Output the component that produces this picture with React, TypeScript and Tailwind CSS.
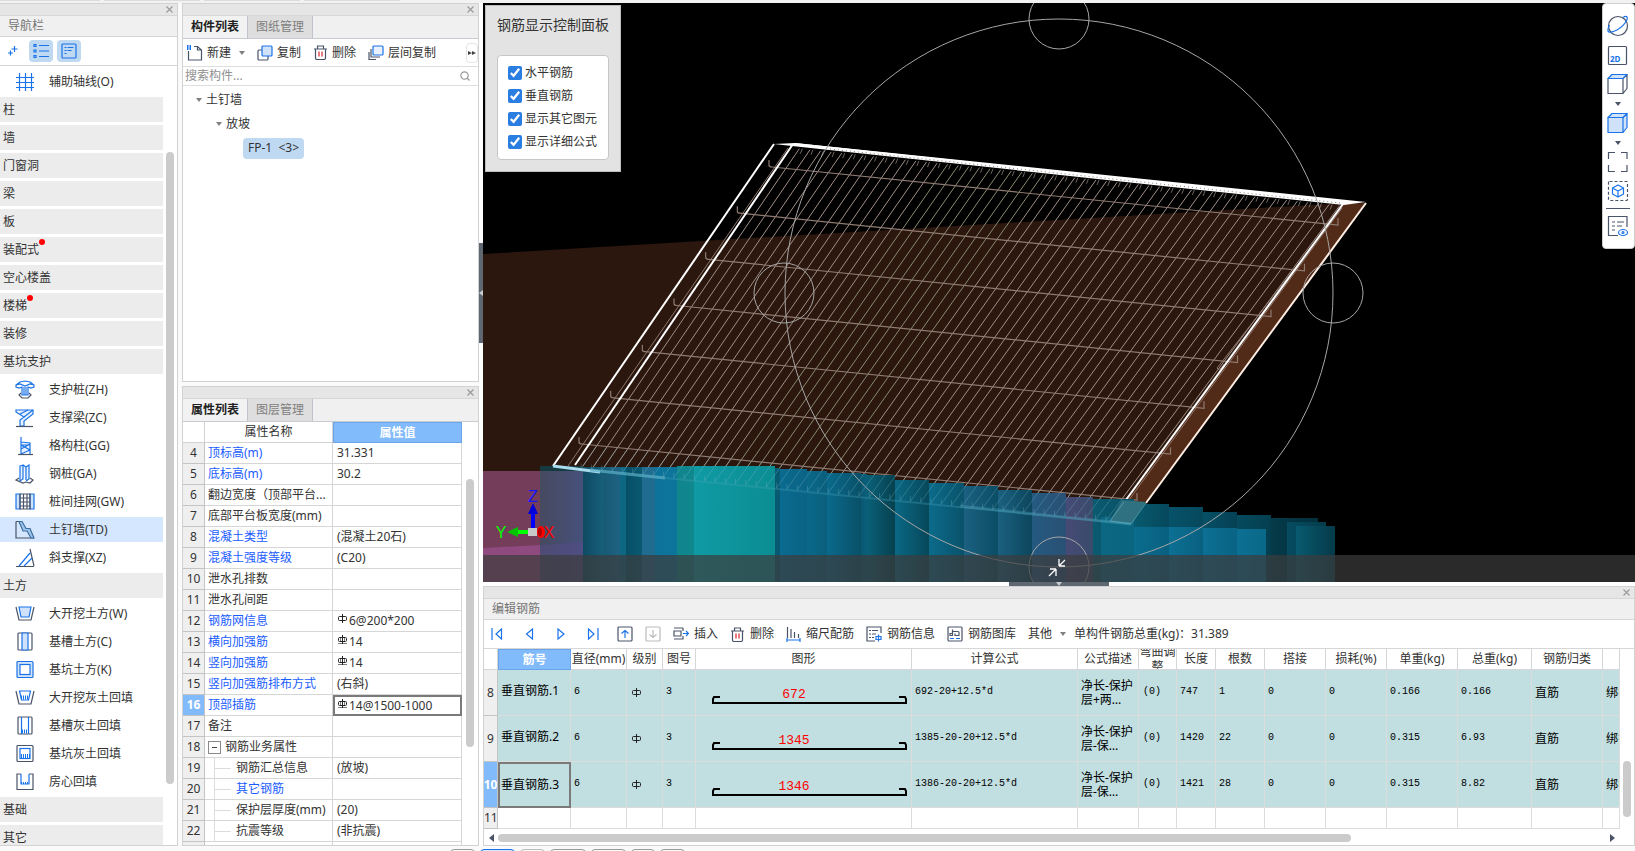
import * as React from 'react'

const BLUE = '#1a73e8'
const INK = '#4a5468'
const FILL = '#d0e2fa'

interface IconProps {
  size?: number
  children: React.ReactNode
}

const Icon: React.FC<IconProps> = ({ size = 20, children }) => (
  <svg
    width={size}
    height={size}
    viewBox={`0 0 ${size} ${size}`}
    fill="none"
    strokeWidth={1.2}
    className="shrink-0"
    aria-hidden="true"
  >
    {children}
  </svg>
)

const CloseButton = () => (
  <button type="button" aria-label="关闭" className="flex h-full w-4 items-center justify-center">
    <svg width="7" height="7" viewBox="0 0 7 7" stroke="#9a9a9a" strokeWidth="1.2">
      <path d="M0.5 0.5l6 6M6.5 0.5l-6 6" />
    </svg>
  </button>
)

const Caret: React.FC<{ color?: string }> = ({ color = '#808080' }) => (
  <svg width="6" height="4" viewBox="0 0 6 4" className="shrink-0" aria-hidden="true">
    <path d="M0 0h6L3 4z" fill={color} />
  </svg>
)

const TitleStrip = () => (
  <div className="flex h-3 shrink-0 justify-end border-b border-[#d6d6d6] bg-[#e6e6e6]">
    <CloseButton />
  </div>
)

/* ---------- navigation ---------- */

const navIcons: Record<string, React.ReactNode> = {
  axis: <path stroke={BLUE} d="M1 5.5h18M1 10.5h18M1 15.5h18M4.5 1v18M10.5 1v18M16.5 1v18" />,
  pile: (
    <>
      <path stroke={BLUE} d="M1 5l4-3 5-1 5 1 4 3v2l-3 1-3-1v8H7V7L4 8 1 7zM1 5l4-1 5 2 5-2 4 1M9 7v8M11 7v8" />
      <path stroke={INK} d="M6 13l-2 2 3 3h6l3-3-2-2" />
    </>
  ),
  strut: (
    <>
      <path stroke={BLUE} fill="#e8f1fd" d="M1 2h17v4l-9 7v5H5v-6l4-3-8-5z" />
      <path stroke={BLUE} d="M5 6l8-4M9 9l9-7" />
      <path stroke={INK} d="M1 18.5h17" />
    </>
  ),
  lattice: (
    <>
      <path stroke={BLUE} fill="#e8f1fd" d="M6 1v17M6 6l9 1v11M6 9h9M6 9l9 5-9 4M6 13l9-5" />
      <path stroke={INK} d="M3 18.5h15" />
    </>
  ),
  steel: (
    <>
      <path stroke={BLUE} fill="#e8f1fd" d="M5 2l3-1v14l-3 2zM8 1l3 2v13M11 3l3-2v14l-3 2" />
      <path stroke={INK} d="M4 14l-3 2 7 3 3-1 4 1 3-3-3-2" />
    </>
  ),
  mesh: (
    <>
      <path stroke={BLUE} fill={FILL} d="M1 2h4v15H1zM15 2h4v15h-4z" />
      <path stroke={INK} d="M5 2h10v15H5zM8.5 2v15M12 2v15M5 6h10M5 10h10M5 14h10" />
    </>
  ),
  nail: (
    <>
      <path stroke={INK} d="M1 1.5v16.5h18M1 1.5l5 0" />
      <path stroke="#3c6f9f" fill="#9fc4ea" d="M4 1.5h3l4 7h4l4 9.5h-3l-4-7H8z" />
    </>
  ),
  brace: (
    <>
      <path stroke={INK} d="M1 18.5h18M15 1l4 17" />
      <path stroke={BLUE} d="M4 18L15 5M9 18l8-8" />
    </>
  ),
  dig: (
    <>
      <path stroke={INK} d="M1 3l3 13h12l3-13" />
      <path stroke={BLUE} fill={FILL} d="M4 3h12l-2 10H6z" />
    </>
  ),
  trench: (
    <>
      <rect stroke={INK} x="3" y="1" width="14" height="17" rx="1" />
      <path stroke={BLUE} fill={FILL} d="M7 1h6v17H7z" />
    </>
  ),
  pit: (
    <>
      <rect stroke={BLUE} fill={FILL} x="2" y="1.5" width="16" height="16" rx="1" />
      <rect stroke={BLUE} fill="#fff" x="5" y="4.5" width="10" height="10" />
    </>
  ),
  digFill: (
    <>
      <path stroke={INK} d="M1 3l3 13h12l3-13" />
      <path stroke={BLUE} d="M4.5 3h11l-2 9h-7z" />
      <path stroke={BLUE} strokeWidth={4} strokeDasharray="1 1" d="M6 9.5h8" />
    </>
  ),
  trenchFill: (
    <>
      <rect stroke={INK} x="3" y="1" width="14" height="17" rx="1" />
      <path stroke={BLUE} d="M6.5 1v17M13.5 1v17" />
      <path stroke={BLUE} strokeWidth={4} strokeDasharray="1 1" d="M7 15.5h6" />
    </>
  ),
  pitFill: (
    <>
      <rect stroke={INK} x="2" y="1.5" width="16" height="16" rx="1" />
      <rect stroke={BLUE} x="5" y="4.5" width="10" height="10" />
      <path stroke={BLUE} strokeWidth={4} strokeDasharray="1 1" d="M6 12h9" />
    </>
  ),
  room: (
    <>
      <path stroke={INK} d="M6 2H2v15.500h16V2h-4" />
      <path stroke={BLUE} d="M6 2v10h8V2" />
      <path stroke={BLUE} strokeWidth={2} strokeDasharray="1 1" d="M6 11h8" />
    </>
  ),
}

interface NavRow {
  label: string
  icon?: string
  dot?: boolean
  active?: boolean
}

const navRows: NavRow[] = [
  { label: '辅助轴线(O)', icon: 'axis' },
  { label: '柱' },
  { label: '墙' },
  { label: '门窗洞' },
  { label: '梁' },
  { label: '板' },
  { label: '装配式', dot: true },
  { label: '空心楼盖' },
  { label: '楼梯', dot: true },
  { label: '装修' },
  { label: '基坑支护' },
  { label: '支护桩(ZH)', icon: 'pile' },
  { label: '支撑梁(ZC)', icon: 'strut' },
  { label: '格构柱(GG)', icon: 'lattice' },
  { label: '钢桩(GA)', icon: 'steel' },
  { label: '桩间挂网(GW)', icon: 'mesh' },
  { label: '土钉墙(TD)', icon: 'nail', active: true },
  { label: '斜支撑(XZ)', icon: 'brace' },
  { label: '土方' },
  { label: '大开挖土方(W)', icon: 'dig' },
  { label: '基槽土方(C)', icon: 'trench' },
  { label: '基坑土方(K)', icon: 'pit' },
  { label: '大开挖灰土回填', icon: 'digFill' },
  { label: '基槽灰土回填', icon: 'trenchFill' },
  { label: '基坑灰土回填', icon: 'pitFill' },
  { label: '房心回填', icon: 'room' },
  { label: '基础' },
  { label: '其它' },
]

const Navigation = () => (
  <nav className="flex w-[178px] shrink-0 flex-col border border-l-0 border-[#d2d2d2] bg-white">
    <TitleStrip />
    <h2 className="flex h-[21px] shrink-0 items-center border-b border-[#d6d6d6] bg-[#f0f0f0] pl-2 text-[#757575]">
      导航栏
    </h2>
    <div className="flex h-[29px] shrink-0 items-center gap-1 border-b border-[#d6d6d6] pl-1">
      <button type="button" aria-label="展开" className="flex w-[21px] items-center pl-1">
        <Icon size={10}>
          <path stroke={BLUE} d="M6.5 0v6M3.5 3h6M2.5 4.5v5M0 7h5" />
        </Icon>
      </button>
      <button type="button" aria-label="列表" className="flex h-[22px] w-6 items-center justify-center rounded-sm bg-[#bfd9f2]">
        <Icon size={16}>
          <path stroke={BLUE} d="M6 2.5h10M6 8h10M6 13.5h10" />
          <path stroke={BLUE} d="M1 1.5h2v2H1zM1 7h2v2H1zM1 12.5h2v2H1z" />
        </Icon>
      </button>
      <button type="button" aria-label="详情" className="flex h-[22px] w-6 items-center justify-center rounded-sm bg-[#bfd9f2]">
        <Icon size={16}>
          <rect stroke={BLUE} x="1" y="1" width="14" height="14" rx="1" />
          <path stroke={BLUE} d="M3.5 4.5h2M6.5 4.5h6M3.5 7.5h2M6.5 7.5h4M3.5 10.5h2" />
        </Icon>
      </button>
    </div>
    <div className="flex min-h-0 flex-1 overflow-hidden">
      <ul className="flex flex-1 flex-col gap-[3px] pt-[3px]">
        {navRows.map(row => (
          <li key={row.label} className="shrink-0">
            {row.icon ? (
              <button
                type="button"
                className={`flex h-[25px] w-full items-center gap-[14px] pl-[15px] ${row.active ? 'bg-[#d4e7ff]' : ''}`}
              >
                <Icon>{navIcons[row.icon]}</Icon>
                <span>{row.label}</span>
              </button>
            ) : (
              <button type="button" className="flex h-[25px] w-full items-center bg-[#ececec] pl-[3px]">
                {row.label}
                {row.dot && <span className="mb-4 size-[6px] rounded-full bg-[#ff0000]" />}
              </button>
            )}
          </li>
        ))}
      </ul>
      <div className="w-[14px] px-[3px] pt-[86px]">
        <div className="h-[632px] w-2 rounded bg-[#cbcbcb]" />
      </div>
    </div>
  </nav>
)

/* ---------- component tree ---------- */

const Tabs: React.FC<{ items: string[] }> = ({ items }) => (
  <div className="flex h-[23px] shrink-0 border-b border-[#c8ccd2] bg-[#f0f0f0]">
    {items.map((item, i) => (
      <button
        key={item}
        type="button"
        className={`w-[65px] border-r border-[#c0c4ca] ${i === 0 ? 'bg-[#f2f2f2] font-bold text-[#222]' : 'bg-[#dedede] text-[#808080]'}`}
      >
        {item}
      </button>
    ))}
  </div>
)

const TrashIcon = () => (
  <Icon size={15}>
    <path stroke={INK} d="M1 4h13M4.5 4V1h6v3M2.5 4v9a1.5 1.5 0 0 0 1.5 1.5h7a1.5 1.5 0 0 0 1.5-1.5V4" />
    <path stroke="#d9232e" d="M6 6.5v5M9 6.5v5" />
  </Icon>
)

const ComponentPanel = () => (
  <section className="flex h-[379px] shrink-0 flex-col border border-[#d2d2d2] bg-white">
    <TitleStrip />
    <Tabs items={['构件列表', '图纸管理']} />
    <div className="flex h-[28px] shrink-0 items-center border-b border-[#dedede] pl-1">
      <button type="button" className="flex items-center gap-1">
        <Icon size={16}>
          <path stroke={INK} d="M1.5 6v9h13V5l-4-3.5H7M10.5 1.5V5h4" />
          <path stroke={BLUE} strokeWidth={5} strokeDasharray="1.5 1" d="M0 2.5h5" />
        </Icon>
        新建
      </button>
      <span className="ml-2">
        <Caret />
      </span>
      <button type="button" className="ml-3 flex items-center gap-1">
        <Icon size={16}>
          <rect stroke={INK} x="1" y="5" width="10" height="10" rx="1" />
          <rect stroke={BLUE} fill={FILL} x="5" y="1" width="10" height="10" rx="1" />
        </Icon>
        复制
      </button>
      <button type="button" className="ml-3 flex items-center gap-1">
        <TrashIcon />
        删除
      </button>
      <button type="button" className="ml-3 flex items-center gap-1">
        <Icon size={16}>
          <rect stroke={BLUE} fill="#e8f1fd" x="5" y="1" width="10" height="9" rx="1" />
          <path stroke={INK} d="M3 4v8h9M1 7v7.5h7" />
        </Icon>
        层间复制
      </button>
      <button type="button" aria-label="更多" className="ml-auto flex h-5 w-3 items-center justify-center rounded-sm border border-[#e4e4e4]">
        <svg width="8" height="4" viewBox="0 0 8 4" className="shrink-0">
          <path d="M0 0l4 2-4 2zM4 0l4 2-4 2z" fill="#444" />
        </svg>
      </button>
    </div>
    <div className="flex h-[19px] shrink-0 items-center border-b border-[#dedede] pr-2 pl-[2px]">
      <input
        type="text"
        aria-label="搜索构件"
        placeholder="搜索构件..."
        className="min-w-0 flex-1 outline-none placeholder:text-[#8f8f8f]"
      />
      <Icon size={10}>
        <circle stroke="#999" cx="4.5" cy="4.5" r="3.7" />
        <path stroke="#999" d="M7 7l2.5 2.5" />
      </Icon>
    </div>
    <ul className="flex flex-col pt-[2px]">
      <li className="flex h-6 items-center gap-1 pl-[13px]">
        <Caret />
        土钉墙
      </li>
      <li className="flex h-6 items-center gap-1 pl-[33px]">
        <Caret />
        放坡
      </li>
      <li className="flex h-6 items-center pl-[60px]">
        <button type="button" className="h-[21px] w-[61px] rounded-sm bg-[#bfd9f2] whitespace-pre">
          FP-1  &lt;3&gt;
        </button>
      </li>
    </ul>
  </section>
)

/* ---------- properties ---------- */

// rebar grade mark, HPB has one bar and HRB has an underline
const RebarMark: React.FC<{ grade?: 'a' | 'c' }> = ({ grade = 'a' }) => (
  <svg width="9" height="10" viewBox="0 0 9 10" fill="none" stroke="#222" className="inline-block shrink-0" role="img" aria-label="Φ">
    <rect x="0.5" y="2.5" width="8" height="4" rx="1" />
    <path d="M4.5 0v9" />
    {grade === 'c' && <path d="M0 8.5h9M2.5 2.5v4M6.5 2.5v4" strokeWidth="0.6" />}
  </svg>
)

interface PropRow {
  no: number
  name: string
  value?: string
  mark?: 'a' | 'c'
  blue?: boolean
  kind?: 'group' | 'child'
}

const propRows: PropRow[] = [
  { no: 4, name: '顶标高(m)', value: '31.331', blue: true },
  { no: 5, name: '底标高(m)', value: '30.2', blue: true },
  { no: 6, name: '翻边宽度（顶部平台...' },
  { no: 7, name: '底部平台板宽度(mm)' },
  { no: 8, name: '混凝土类型', value: '(混凝土20石)', blue: true },
  { no: 9, name: '混凝土强度等级', value: '(C20)', blue: true },
  { no: 10, name: '泄水孔排数' },
  { no: 11, name: '泄水孔间距' },
  { no: 12, name: '钢筋网信息', value: '6@200*200', mark: 'a', blue: true },
  { no: 13, name: '横向加强筋', value: '14', mark: 'c', blue: true },
  { no: 14, name: '竖向加强筋', value: '14', mark: 'c', blue: true },
  { no: 15, name: '竖向加强筋排布方式', value: '(右斜)', blue: true },
  { no: 16, name: '顶部插筋', value: '14@1500-1000', mark: 'c', blue: true },
  { no: 17, name: '备注' },
  { no: 18, name: '钢筋业务属性', kind: 'group' },
  { no: 19, name: '钢筋汇总信息', value: '(放坡)', kind: 'child' },
  { no: 20, name: '其它钢筋', blue: true, kind: 'child' },
  { no: 21, name: '保护层厚度(mm)', value: '(20)', kind: 'child' },
  { no: 22, name: '抗震等级', value: '(非抗震)', kind: 'child' },
]

const PropertyPanel = () => (
  <section className="flex min-h-0 flex-1 flex-col border border-[#d2d2d2] bg-white">
    <TitleStrip />
    <Tabs items={['属性列表', '图层管理']} />
    <div className="flex min-h-0 flex-1 overflow-hidden">
      <div className="flex-1">
        <table className="w-full table-fixed border-separate border-spacing-0">
          <colgroup>
            <col className="w-[22px]" />
            <col className="w-[128px]" />
            <col />
          </colgroup>
          <thead>
            <tr className="h-[21px]">
              <th className="border-r border-b border-[#d2d2d2]" />
              <th className="border-r border-b border-[#d2d2d2] p-0 font-normal">属性名称</th>
              <th className="border border-[#69a5e8] bg-[#82bbfb] p-0 font-bold text-white">属性值</th>
            </tr>
          </thead>
          <tbody>
            {propRows.map(row => {
              const current = row.no === 16
              return (
                <tr key={row.no} className="h-[21px]">
                  <td
                    className={`border-r border-b border-[#c4c4c4] p-0 text-center ${current ? 'bg-[#82bbfb] font-bold text-white' : 'bg-[#efefef]'}`}
                  >
                    {row.no}
                  </td>
                  <td className={`border-r border-b border-[#d6d6d6] p-0 whitespace-nowrap ${row.blue ? 'text-[#1a5cff]' : ''}`}>
                    <div className="flex h-5 items-center overflow-hidden pl-[3px]">
                      {row.kind === 'group' && (
                        <button type="button" aria-label="折叠" className="mr-1 flex size-[13px] items-center justify-center border border-[#8a8a8a]">
                          <span className="h-px w-[5px] bg-[#444]" />
                        </button>
                      )}
                      {row.kind === 'child' && (
                        <svg width="28" height="20" viewBox="0 0 28 20" stroke="#dcdcdc" className="shrink-0">
                          <path d="M6.5 0v20M6.5 10.5h16" />
                        </svg>
                      )}
                      {row.name}
                    </div>
                  </td>
                  <td
                    className={`p-0 whitespace-nowrap ${current ? 'border-2 border-[#7a7a7a]' : 'border-r border-b border-[#d6d6d6]'}`}
                  >
                    <div className={`flex items-center ${current ? 'h-[17px] pl-[2px]' : 'h-5 pl-1'}`}>
                      {row.mark && (
                        <span className="mb-1 flex w-3 pl-px">
                          <RebarMark grade={row.mark} />
                        </span>
                      )}
                      {row.value}
                    </div>
                  </td>
                </tr>
              )
            })}
          </tbody>
        </table>
        <div className="flex h-5">
          <div className="w-[22px] border-r border-[#c4c4c4] bg-[#efefef]" />
          <div className="w-[128px] border-r border-[#d6d6d6]" />
          <div className="flex-1 border-r border-[#d6d6d6]" />
        </div>
      </div>
      <div className="w-4 pt-[57px] pl-1">
        <div className="h-[268px] w-2 rounded bg-[#cbcbcb]" />
      </div>
    </div>
  </section>
)

/* ---------- 3D viewport ---------- */

// x, width, top, left colour, right colour
const piles: [number, number, number, string, string][] = [
  [540, 43, 467, '#464a60', '#46507a'],
  [583, 20, 467, '#0e4a62', '#175e7a'],
  [603, 17, 467, '#175a75', '#1e6283'],
  [620, 6, 467, '#0d6682', '#0d6682'],
  [626, 16, 467, '#064f66', '#0a5973'],
  [642, 13, 467, '#1f6c90', '#1f6c90'],
  [655, 22, 467, '#0e729a', '#0c759a'],
  [677, 17, 466, '#10858c', '#0f888e'],
  [694, 81, 466, '#0f9aa3', '#0c8d94'],
  [775, 5, 468, '#075a72', '#075a72'],
  [780, 27, 469, '#0a6b90', '#0a6384'],
  [807, 20, 471, '#0a6888', '#0a5f7c'],
  [827, 34, 473, '#0a6a8c', '#095068'],
  [861, 6, 474, '#095872', '#0a5f7a'],
  [867, 28, 475, '#0a6078', '#06414f'],
  [895, 34, 480, '#0a6884', '#07485a'],
  [929, 35, 483, '#0b6b8b', '#09526a'],
  [964, 34, 486, '#1c6082', '#0a4d64'],
  [998, 34, 490, '#1b6080', '#0b465c'],
  [1032, 34, 493, '#245a80', '#2b5075'],
  [1066, 27, 497, '#474a75', '#394b6b'],
  [1093, 41, 499, '#0a5a70', '#085064'],
  [1134, 35, 504, '#085a6e', '#06485c'],
  [1169, 34, 507, '#075269', '#06485c'],
  [1203, 34, 512, '#065066', '#054154'],
  [1237, 34, 515, '#054a5e', '#043f50'],
  [1271, 47, 518, '#053a49', '#03303d'],
  [1287, 39, 522, '#064c62', '#043b4a'],
  [1296, 39, 526, '#085a70', '#053a49'],
  [1101, 33, 517, '#0b6782', '#0a6580'],
  [1134, 35, 527, '#0b6d8e', '#096080'],
  [1169, 34, 527, '#0c7094', '#096080'],
  [1203, 34, 528, '#0c7094', '#096384'],
  [1237, 29, 529, '#0c7094', '#0a6888'],
]

const lerp = (a: number, b: number, t: number) => a + (b - a) * t

const BAR_COUNT = 52
const bars = Array.from({ length: BAR_COUNT }, (_, i) => {
  const t = (i + 0.6) / BAR_COUNT
  return {
    x1: lerp(793, 1344, t),
    y1: lerp(148, 206, t),
    x2: lerp(575, 1110, t),
    y2: lerp(468, 521, t),
    olive: i > 13 && i < 24,
  }
})

const rows = Array.from({ length: 7 }, (_, i) => {
  const t = i / 6
  return {
    x1: lerp(770, 580, t),
    y1: lerp(167, 444, t),
    x2: lerp(1338, 1137, t),
    y2: lerp(225, 500, t),
  }
})

const Scene = () => (
  <svg viewBox="483 3 1152 579" preserveAspectRatio="xMidYMid slice" className="block h-full w-full" fill="none">
    <defs>
      {piles.map(([, , , from, to], i) => (
        <linearGradient key={i} id={`pile${i}`}>
          <stop offset="0" stopColor={from} />
          <stop offset="1" stopColor={to} />
        </linearGradient>
      ))}
      <clipPath id="slope">
        <path d="M774 143L1345 202L1112 524L553 468Z" />
      </clipPath>
    </defs>
    <rect x="483" y="3" width="1152" height="579" fill="#000" />
    <path d="M483 254L1344 203L1112 521L900 582H483Z" fill="#2b170e" />
    <path d="M483 471H540V582H483Z" fill="#743d5a" />
    <path d="M483 548L540 545V582H483Z" fill="#8f4a80" />
    <path d="M1366 203L1344 204L1110 521L1131 524Z" fill="#522a18" />

    <g clipPath="url(#slope)">
      {bars.map((bar, i) => (
        <path
          key={i}
          d={`M${bar.x1} ${bar.y1}L${bar.x2} ${bar.y2}`}
          stroke={bar.olive ? '#8b8a72' : '#a08f87'}
        />
      ))}
      {bars.map((bar, i) => (
        <path key={i} d={`M${bar.x1 + 3} ${bar.y1}l-2 5`} stroke="#b8aaa4" opacity="0.600" />
      ))}
    </g>
    <path d="M788 148L568 466M1342 208L1217 368q2 4 7-4M1342 208L1126 504" stroke="#8b756b" />
    {rows.map((row, i) => (
      <path
        key={i}
        d={`M${row.x1 - 1} ${row.y1 - 7}v5q0 2 3 2L${row.x2} ${row.y2}v-7`}
        stroke="#8f7b72"
        strokeWidth="1.2"
      />
    ))}
    <path d="M774 144L553 466" stroke="#fff" strokeWidth="2" />
    <path d="M793 144L575 465" stroke="#fff" strokeWidth="2" />
    <path d="M1343 204L1120 508" stroke="#fff" strokeWidth="2" />
    <path d="M1366 203L1146 503" stroke="#ffeee4" strokeWidth="2" />

    {piles.map(([x, w, top], i) => (
      <rect key={i} x={x} y={top} width={w} height={582 - top} fill={`url(#pile${i})`} />
    ))}
    <path d="M540 466H583V471H540Z" fill="#153a40" />
    <path d="M540 545L583 542V582H540Z" fill="#5a4a90" opacity="0.400" />

    {/* foot of the slope, seen through the piles */}
    {bars.map((bar, i) => (
      <path
        key={i}
        d={`M${lerp(bar.x1, bar.x2, 0.93)} ${lerp(bar.y1, bar.y2, 0.93)}L${bar.x2} ${bar.y2}v-5`}
        stroke="#7fb8c8"
        opacity="0.300"
      />
    ))}
    <path d="M1146 502L1122 500L1110 521L1131 524Z" fill="#2f7180" />
    <path d="M1146 503L1131 524L1110 521L1124 502" stroke="#64a9b8" opacity="0.700" />
    <path d="M553 466L600 472" stroke="#a8dcec" strokeWidth="3" />
    <path d="M590 470L665 478" stroke="#5cb0c8" strokeWidth="3" opacity="0.700" />
    <path d="M665 478L1131 524" stroke="#4aa5be" strokeWidth="2" opacity="0.300" />
    <path d="M960 506L1131 524" stroke="#5cb0c8" strokeWidth="3" opacity="0.300" />

    <path d="M774 144L795 143L1366 202L1344 205L1200 190L792 146Z" fill="#fff" />
    <path d="M795 144L1340 202" stroke="#fff" strokeWidth="2" />
    <path d="M830 149L1340 203" stroke="#8b8079" strokeDasharray="1 3" />

    <g stroke="#a6a6a6">
      <circle cx="1059" cy="293" r="274" />
      <circle cx="1059" cy="19" r="30" />
      <circle cx="784" cy="293" r="30" />
      <circle cx="1333" cy="293" r="30" />
      <circle cx="1059" cy="567" r="30" />
    </g>
    <rect x="483" y="555" width="1152" height="27" fill="#3c3c3c" opacity="0.700" />
    <path d="M1059 566v-7M1059 566h6M1059 566l6-6M1056 569v7M1056 569h-6M1056 569l-7 7" stroke="#fff" strokeWidth="1.3" />

    {/* axis gizmo */}
    <path d="M533 530V513" stroke="#0000ff" strokeWidth="4" />
    <path d="M533 503L538 514H528Z" fill="#0000d8" />
    <path d="M530 532H517" stroke="#00ff00" strokeWidth="4" />
    <path d="M507 532L518 527V537Z" fill="#00c800" />
    <rect x="528" y="528" width="9" height="8" fill="#c8c8c8" />
    <ellipse cx="541" cy="532" rx="4" ry="6" fill="#ff0000" />
    <ellipse cx="540" cy="532" rx="2" ry="4" fill="#b00000" />
    <g className="font-['Liberation_Sans',sans-serif] text-base" textAnchor="middle">
      <text x="533" y="502" fill="#1414ff">Z</text>
      <text x="501" y="538" fill="#00ff00">Y</text>
      <text x="549" y="538" fill="#ff0000">X</text>
    </g>
  </svg>
)

const displayOptions = ['水平钢筋', '垂直钢筋', '显示其它图元', '显示详细公式']

const DisplayPanel = () => (
  <fieldset className="absolute top-[2px] left-[2px] h-[167px] w-[135px] border border-[#bdbdbd] bg-[#e3e3e3] px-[11px]">
    <div className="pt-[11px] pb-[22px] text-sm leading-4 whitespace-nowrap">钢筋显示控制面板</div>
    <div className="flex h-[105px] flex-col gap-[7px] rounded-sm border border-[#c6c6c6] bg-white pt-[9px] pl-[10px]">
      {displayOptions.map(option => (
        <label key={option} className="flex h-4 items-center gap-[3px] whitespace-nowrap">
          <input type="checkbox" defaultChecked className="size-[14px] accent-[#2a7de1]" />
          {option}
        </label>
      ))}
    </div>
  </fieldset>
)

const Cube: React.FC<{ active?: boolean }> = ({ active }) => (
  <Icon size={22}>
    <path stroke={active ? BLUE : INK} fill={active ? FILL : '#fff'} strokeLinejoin="round" d="M1 5.5h15v15H1zM16 5.5l4-4v14l-4 5z" />
    <path stroke={BLUE} fill={FILL} strokeLinejoin="round" d="M1 5.5l4-4h15l-4 4z" />
  </Icon>
)

const ViewToolbar = () => (
  <div className="absolute top-0 right-0 flex h-[246px] w-[33px] flex-col items-center rounded-sm border border-[#cfcfcf] bg-white pt-[11px] pr-[2px]">
    <button type="button" aria-label="动态观察">
      <Icon size={22}>
        <circle stroke={INK} cx="11" cy="11" r="9.5" />
        <path stroke={BLUE} d="M16 2.5c3-2 5-1 4 2s-5 8-10 10.5-8.500 3-9 1 1-5 1.500-6" />
      </Icon>
    </button>
    <button type="button" aria-label="二维" className="mt-2">
      <Icon size={22}>
        <rect stroke={INK} x="1.5" y="1.5" width="18" height="18" rx="1" />
        <text x="3" y="17" fill={BLUE} className="font-['Noto_Sans'] text-[8px] font-bold">2D</text>
      </Icon>
    </button>
    <button type="button" aria-label="视图" className="mt-[6px] flex flex-col items-center gap-[7px]">
      <Cube />
      <Caret color={INK} />
    </button>
    <button type="button" aria-label="显示样式" className="mt-[6px] flex flex-col items-center gap-[7px]">
      <Cube active />
      <Caret color={INK} />
    </button>
    <button type="button" aria-label="全屏" className="mt-[6px]">
      <Icon size={22}>
        <path stroke={INK} d="M1.5 8V1.5H8M14 1.5h6V8M20 14v6.500h-6M8 20.500H1.500V14" />
      </Icon>
    </button>
    <button type="button" aria-label="局部三维" className="mt-[7px]">
      <Icon size={22}>
        <rect stroke={INK} strokeDasharray="3 2" x="1.5" y="1.5" width="19" height="19" rx="1" />
        <path stroke={BLUE} strokeLinejoin="round" d="M11 5l5.500 3v6L11 17l-5.500-3V8zM5.500 8l5.500 3 5.500-3M11 11v6" />
      </Icon>
    </button>
    <div className="mt-[6px] h-px w-6 shrink-0 bg-[#4a5468]" />
    <button type="button" aria-label="显示设置" className="mt-[6px]">
      <Icon size={22}>
        <path stroke={INK} d="M20 12V1.5H1.5v19H11M5 7h3M10 7h7M5 11h3M10 11h5M5 15h3" />
        <ellipse stroke={BLUE} cx="16" cy="17.5" rx="4.5" ry="3" />
        <circle stroke={BLUE} cx="16" cy="17.5" r="1" />
      </Icon>
    </button>
  </div>
)

/* ---------- rebar editor ---------- */

interface ToolProps {
  icon?: React.ReactNode
  label: string
  className: string
}

const Tool: React.FC<ToolProps> = ({ icon, label, className }) => (
  <button type="button" className={`flex items-center gap-[5px] whitespace-nowrap ${className}`}>
    {icon}
    {label}
  </button>
)

const RebarToolbar = () => (
  <div className="flex h-[29px] shrink-0 items-center border-b border-[#d6d6d6] pl-[7px]">
    <button type="button" aria-label="首行">
      <Icon size={12}><path stroke={BLUE} d="M1 0v12M10.5 1v10L5 6z" /></Icon>
    </button>
    <button type="button" aria-label="上一行" className="ml-5">
      <Icon size={12}><path stroke={BLUE} d="M9.5 1v10L3.5 6z" /></Icon>
    </button>
    <button type="button" aria-label="下一行" className="ml-5">
      <Icon size={12}><path stroke={BLUE} d="M3 1v10l6-5z" /></Icon>
    </button>
    <button type="button" aria-label="末行" className="ml-5">
      <Icon size={12}><path stroke={BLUE} d="M1.5 1v10L7 6zM11 0v12" /></Icon>
    </button>
    <button type="button" aria-label="上移" className="ml-[18px]">
      <Icon size={16}>
        <rect stroke={INK} x="1" y="1" width="14" height="14" rx="1" />
        <path stroke={BLUE} d="M8 12V4.5M4.5 7.5L8 4.5l3.5 3" />
      </Icon>
    </button>
    <button type="button" aria-label="下移" disabled className="ml-3">
      <Icon size={16}>
        <rect stroke="#bbb" x="1" y="1" width="14" height="14" rx="1" />
        <path stroke="#bbb" d="M8 4v7.5M4.5 8.5l3.5 3 3.5-3" />
      </Icon>
    </button>
    <Tool
      className="ml-3"
      label="插入"
      icon={
        <Icon size={16}>
          <path stroke={INK} d="M10 2H1M10 5V2M1 5h7v5H1zM1 13h9v-3" />
          <path stroke={BLUE} d="M10 7.5h5M13 5l2.5 2.5L13 10" />
        </Icon>
      }
    />
    <Tool className="ml-3" label="删除" icon={<TrashIcon />} />
    <Tool
      className="ml-3"
      label="缩尺配筋"
      icon={
        <Icon size={15}>
          <path stroke={INK} d="M1.5 0v11M5 2v9M8.5 5v6M12.5 7v4" />
          <path stroke={BLUE} d="M1 13h13M1 11v4M14 11v4" />
        </Icon>
      }
    />
    <Tool
      className="ml-3"
      label="钢筋信息"
      icon={
        <Icon size={16}>
          <path stroke={INK} d="M15 7V1H1v14h8M3 4.5h2M6 4.5h6M3 8h2M6 8h4M3 11.5h2M6 11.5h2" />
          <path stroke={BLUE} d="M10 10.5h5v3h-5zM12.5 8.5v7" />
        </Icon>
      }
    />
    <Tool
      className="ml-3"
      label="钢筋图库"
      icon={
        <Icon size={16}>
          <rect stroke={INK} x="1" y="1" width="14" height="14" rx="1" />
          <path stroke={INK} d="M5.5 3.5v6M3 7.5h2.5v2H3zM5.5 5.500H11q1 0 1 1v3H8v-2" />
          <path stroke={BLUE} d="M3 12.5h4M9 12.5h4" />
        </Icon>
      }
    />
    <Tool className="mr-2 ml-3" label="其他" />
    <Caret />
    <span className="ml-2 whitespace-nowrap">单构件钢筋总重(kg)：31.389</span>
  </div>
)

interface RebarRow {
  no: number
  name: string
  shape: string
  formula: string
  note: [string, string]
  length: string
  count: string
  unit: string
  total: string
}

const rebarRows: RebarRow[] = [
  { no: 8, name: '垂直钢筋.1', shape: '672', formula: '692-20+12.5*d', note: ['净长-保护', '层+两…'], length: '747', count: '1', unit: '0.166', total: '0.166' },
  { no: 9, name: '垂直钢筋.2', shape: '1345', formula: '1385-20-20+12.5*d', note: ['净长-保护', '层-保…'], length: '1420', count: '22', unit: '0.315', total: '6.93' },
  { no: 10, name: '垂直钢筋.3', shape: '1346', formula: '1386-20-20+12.5*d', note: ['净长-保护', '层-保…'], length: '1421', count: '28', unit: '0.315', total: '8.82' },
]

const headers = ['直径(mm)', '级别', '图号', '图形', '计算公式', '公式描述', '弯曲调整', '长度', '根数', '搭接', '损耗(%)', '单重(kg)', '总重(kg)', '钢筋归类', '']

const Cell: React.FC<{ children?: React.ReactNode; className?: string }> = ({ children, className = 'pl-[3px]' }) => (
  <td className={`overflow-hidden border-r border-b border-[#dcdcdc] bg-[#c1dee0] py-0 pr-0 whitespace-nowrap text-black ${className}`}>
    {children}
  </td>
)

const Num: React.FC<{ children: React.ReactNode }> = ({ children }) => (
  <span className="block pb-px font-['Liberation_Mono',monospace] text-[10px]">{children}</span>
)

const RebarTable = () => (
  <table className="w-full table-fixed border-separate border-spacing-0">
    <colgroup>
      <col className="w-[14px]" />
      <col className="w-[73px]" />
      <col className="w-[56px]" />
      <col className="w-[36px]" />
      <col className="w-[33px]" />
      <col className="w-[216px]" />
      <col />
      <col className="w-[61px]" />
      <col className="w-[38px]" />
      <col className="w-[39px]" />
      <col className="w-[49px]" />
      <col className="w-[61px]" />
      <col className="w-[61px]" />
      <col className="w-[71px]" />
      <col className="w-[74px]" />
      <col className="w-[71px]" />
      <col className="w-[17px]" />
    </colgroup>
    <thead>
      <tr className="h-[21px]">
        <th className="border-r border-b border-[#d6d6d6] p-0" />
        <th className="border border-[#69a5e8] bg-[#82bbfb] p-0 font-bold text-white">筋号</th>
        {headers.map(header => (
          <th key={header} className="border-r border-b border-[#d6d6d6] p-0 font-normal">
            <div className="flex h-5 items-center justify-center overflow-hidden">
              <span className={header === '弯曲调整' ? 'text-center leading-[15px]' : 'whitespace-nowrap'}>{header}</span>
            </div>
          </th>
        ))}
      </tr>
    </thead>
    <tbody>
      {rebarRows.map(row => {
        const current = row.no === 10
        return (
          <tr key={row.no} className="h-[46px]">
            <td
              className={`border-r border-b border-[#c4c4c4] p-0 text-center ${current ? 'bg-[#82bbfb] font-bold text-white' : 'bg-[#efefef]'}`}
            >
              <div className="flex justify-center overflow-hidden">{row.no}</div>
            </td>
            <td
              className={`bg-[#c1dee0] p-0 whitespace-nowrap text-black ${current ? 'border-2 border-[#7a7a7a] pl-px' : 'border-r border-b border-[#dcdcdc] pb-[3px] pl-[3px]'}`}
            >
              {row.name}
            </td>
            <Cell><Num>6</Num></Cell>
            <Cell className="pl-[5px]"><RebarMark /></Cell>
            <Cell><Num>3</Num></Cell>
            <Cell className="pl-4">
              <svg width="196" height="44" viewBox="0 0 196 44" fill="none" className="block" role="img">
                <text x="82" y="27" textAnchor="middle" fill="#f00" className="font-['Liberation_Mono',monospace] text-[13px]">
                  {row.shape}
                </text>
                <path d="M8 26H2L1 28v4h193v-4l-1-2h-6" stroke="#000" strokeWidth="2" />
              </svg>
            </Cell>
            <Cell><Num>{row.formula}</Num></Cell>
            <Cell className="pl-[3px] leading-[14px]">
              {row.note[0]}
              <br />
              {row.note[1]}
            </Cell>
            <Cell className="pl-1"><Num>(0)</Num></Cell>
            <Cell><Num>{row.length}</Num></Cell>
            <Cell><Num>{row.count}</Num></Cell>
            <Cell><Num>0</Num></Cell>
            <Cell><Num>0</Num></Cell>
            <Cell><Num>{row.unit}</Num></Cell>
            <Cell><Num>{row.total}</Num></Cell>
            <Cell>直筋</Cell>
            <Cell>绑扎</Cell>
          </tr>
        )
      })}
      <tr className="h-[21px]">
        <td className="border-r border-b border-[#c4c4c4] bg-[#efefef] p-0 text-center">11</td>
        {Array.from({ length: 16 }, (_, i) => (
          <td key={i} className="border-r border-b border-[#dcdcdc] p-0" />
        ))}
      </tr>
    </tbody>
  </table>
)

const RebarEditor = () => (
  <section className="flex h-[260px] shrink-0 flex-col border border-[#d2d2d2] bg-white">
    <TitleStrip />
    <h2 className="flex h-[21px] shrink-0 items-center border-b border-[#d6d6d6] bg-[#f0f0f0] pl-2 text-[#757575]">
      编辑钢筋
    </h2>
    <RebarToolbar />
    <div className="flex min-h-0 flex-1">
      <div className="min-w-0 flex-1 overflow-hidden">
        <RebarTable />
      </div>
      <div className="w-[14px] pt-[112px] pl-[3px]">
        <div className="h-14 w-2 rounded bg-[#cbcbcb]" />
      </div>
    </div>
    <div className="flex h-[15px] shrink-0 items-center pr-[19px] pl-[5px]">
      <svg width="5" height="8" viewBox="0 0 5 8" fill={INK}><path d="M5 0v8L0 4z" /></svg>
      <div className="mx-1 flex-1">
        <div className="h-2 w-[77%] rounded bg-[#cbcbcb]" />
      </div>
      <svg width="5" height="8" viewBox="0 0 5 8" fill={INK}><path d="M0 0v8l5-4z" /></svg>
    </div>
  </section>
)

export default function App() {
  return (
    <div className="flex h-screen flex-col overflow-hidden bg-[#fafafa] font-['Noto_Sans','Noto_Sans_CJK_SC',sans-serif] text-xs leading-4 text-[#333]">
      <div className="flex h-[3px] shrink-0 gap-1 bg-[#f2f2f2]">
        <div className="h-px w-[100px] bg-[#dcdcdc]" />
        <div className="h-px w-24 bg-[#dcdcdc]" />
        <div className="h-px w-24 bg-[#dcdcdc]" />
        <div className="h-px w-24 bg-[#dcdcdc]" />
      </div>
      <div className="flex min-h-0 flex-1">
        <Navigation />
        <div className="ml-1 flex w-[297px] shrink-0 flex-col gap-1">
          <ComponentPanel />
          <PropertyPanel />
        </div>
        <div className="w-1 shrink-0 bg-white pt-60">
          <button type="button" aria-label="收起左侧" className="flex h-[100px] w-1 items-center bg-[#5f6871]">
            <svg width="4" height="6" viewBox="0 0 4 6"><path d="M4 0v6L0 3z" fill="#c8ccd0" /></svg>
          </button>
        </div>
        <main className="flex min-w-0 flex-1 flex-col">
          <div className="relative min-h-0 flex-1 overflow-hidden bg-black">
            <Scene />
            <DisplayPanel />
            <ViewToolbar />
          </div>
          <div className="flex h-1 shrink-0 justify-center bg-white">
            <button type="button" aria-label="收起下方" className="flex h-1 w-[100px] justify-center bg-[#5f6871]">
              <svg width="6" height="4" viewBox="0 0 6 4"><path d="M0 0h6L3 4z" fill="#c8ccd0" /></svg>
            </button>
          </div>
          <RebarEditor />
        </main>
      </div>
      <div className="flex h-[5px] shrink-0 gap-[5px] overflow-hidden pt-[3px] pl-[450px]">
        <div className="h-5 w-[25px] rounded-sm border border-[#999]" />
        <div className="h-5 w-[35px] rounded-sm border border-[#1a73e8] bg-[#d4e7ff]" />
        <div className="h-5 w-[25px] rounded-sm border border-[#bbb]" />
        <div className="h-5 w-[36px] rounded-sm border border-[#999]" />
        <div className="h-5 w-[35px] rounded-sm border border-[#999]" />
        <div className="h-5 w-[24px] rounded-sm border border-[#999]" />
        <div className="h-5 w-[25px] rounded-sm border border-[#999]" />
      </div>
    </div>
  )
}
